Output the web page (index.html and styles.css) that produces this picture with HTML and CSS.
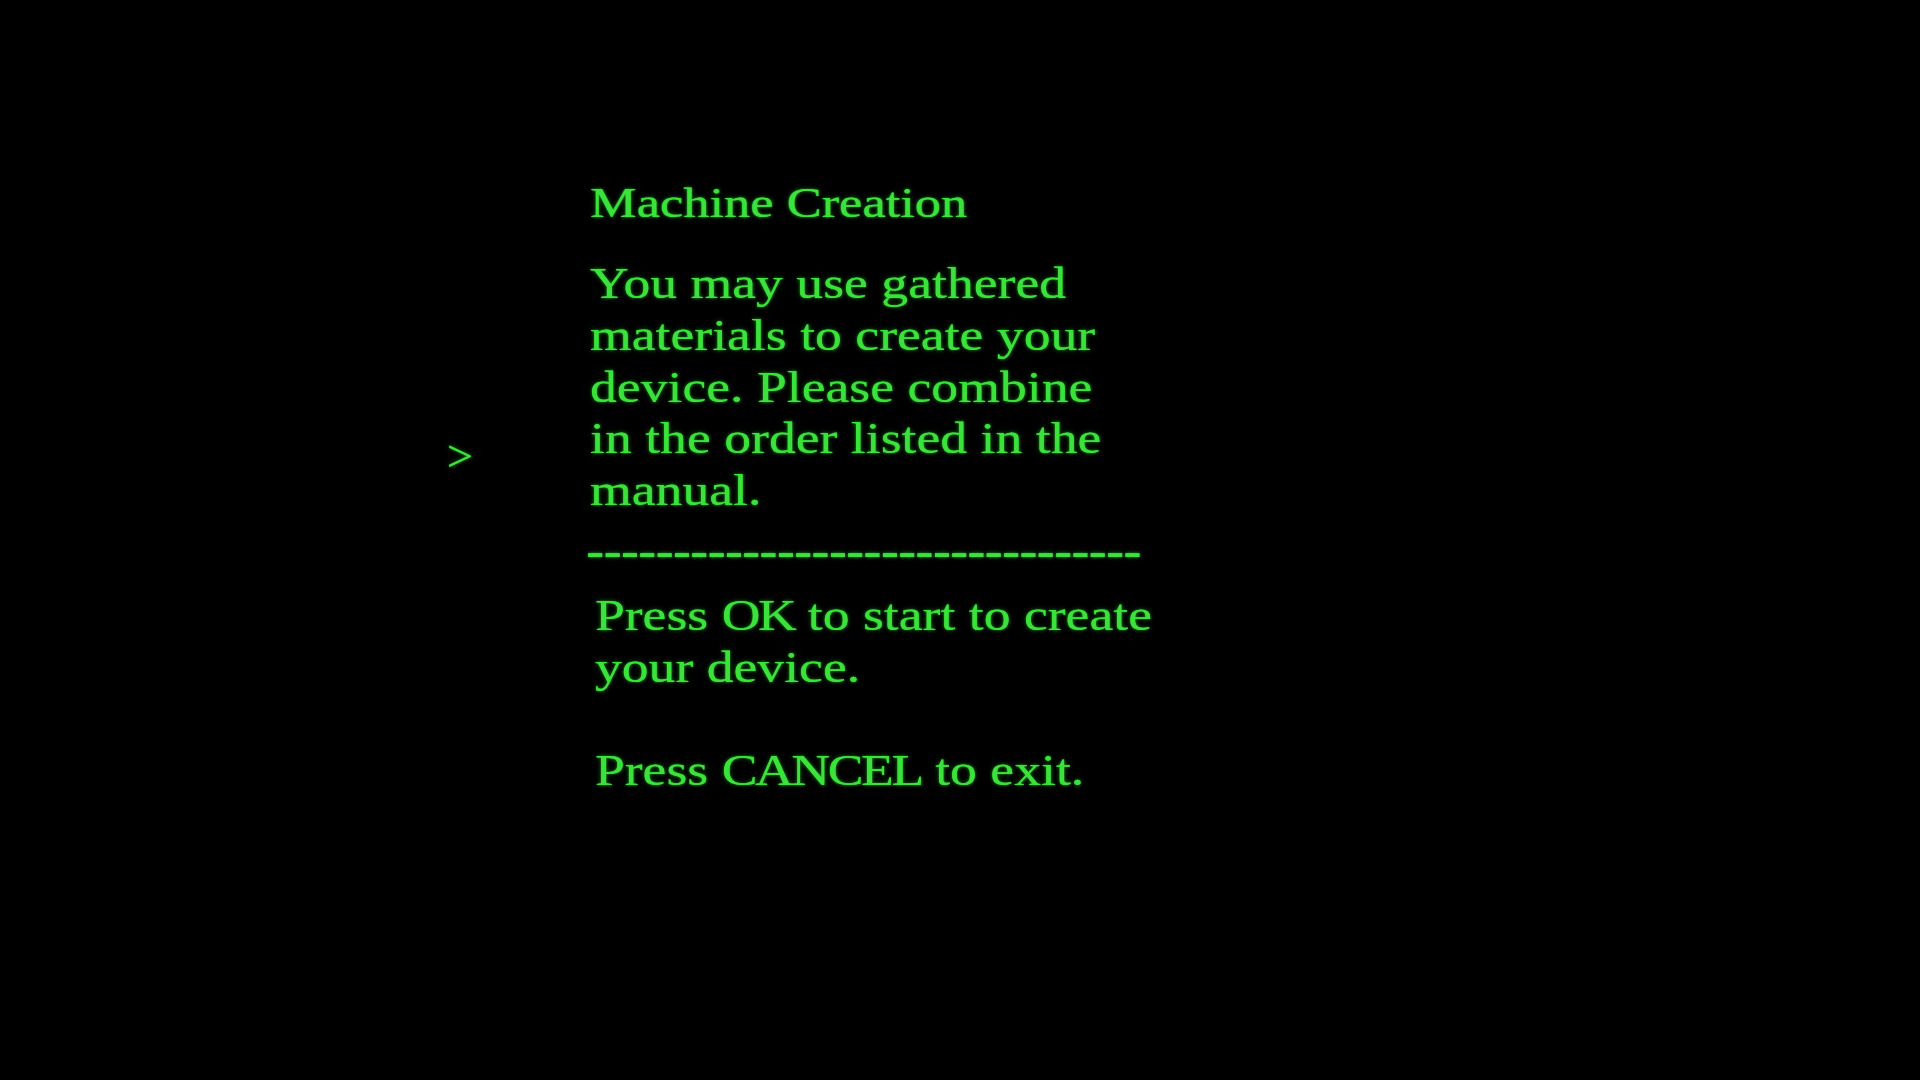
FILE: index.html
```html
<!DOCTYPE html>
<html lang="en">
<head>
<meta charset="utf-8">
<title>Machine Creation</title>
<link rel="stylesheet" href="styles.css">
</head>
<body>
<main class="screen">
  <div class="cursor-col"><span class="cursor">&gt;</span></div>
  <section class="panel">
    <h1 class="title">Machine Creation</h1>
    <p class="body-text">You may use gathered<br>materials to create your<br>device. Please combine<br>in the order listed in the<br>manual.</p>
    <div class="rule">--------------------------------</div>
    <p class="prompt">Press <span class="caps">OK</span> to start to create<br>your device.</p>
    <p class="prompt prompt-exit">Press <span class="caps">CANCEL</span> to exit.</p>
  </section>
</main>
</body>
</html>
```

FILE: styles.css
```css
html, body {
  margin: 0;
  padding: 0;
  background: #000;
  width: 1920px;
  height: 1080px;
  overflow: hidden;
}

.screen {
  display: flex;
  align-items: flex-start;
  padding-top: 177px;
  padding-left: 447px;
  font-family: "Liberation Serif", "Times New Roman", serif;
  color: #3be23b;
  text-shadow: 0 0 1px rgba(60, 230, 60, 0.9), 0 0 4px rgba(40, 255, 40, 0.5);
  font-size: 44px;
  line-height: 51.75px;
}

.cursor-col {
  width: 143px;
  flex: none;
  margin-top: 254px;
}

.cursor {
  display: inline-block;
  transform: scaleX(1.05);
  transform-origin: left top;
}

.panel {
  transform: scaleX(1.22);
  transform-origin: left top;
  white-space: nowrap;
}

.title {
  margin: 0;
  font-size: 43px;
  font-weight: normal;
  line-height: 52px;
}

.body-text {
  margin: 29px 0 0 0;
}

.rule {
  margin: 9px 0 0 -3px;
  font-weight: bold;
  letter-spacing: -0.45px;
  line-height: 52px;
}

.prompt {
  margin: 12px 0 0 0;
  padding-left: 4px;
}

.prompt-exit {
  margin-top: 51.75px;
}

.caps {
  letter-spacing: -2px;
}
```
